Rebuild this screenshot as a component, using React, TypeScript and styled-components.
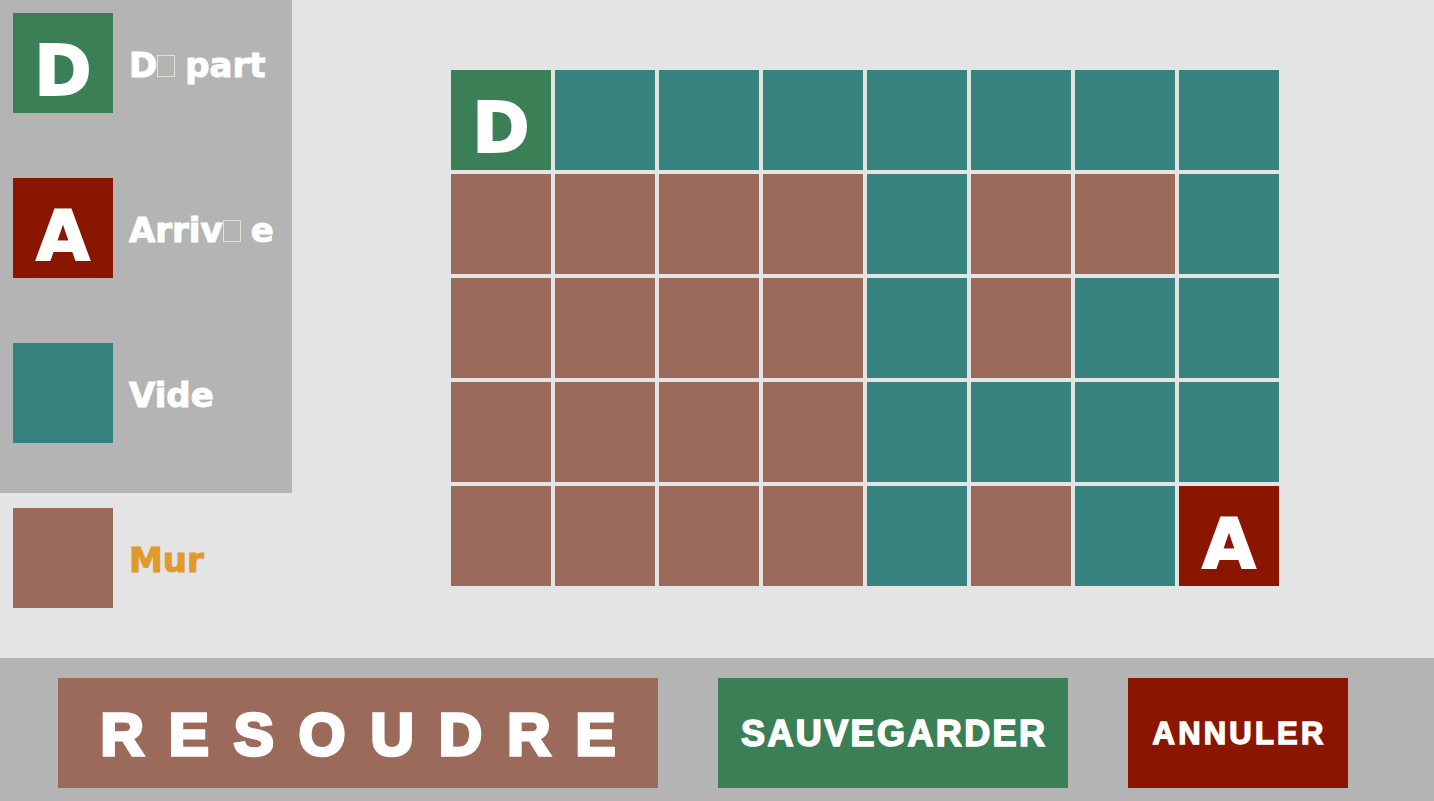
import React from "react";
import styled, { createGlobalStyle } from "styled-components";

const GlobalStyle = createGlobalStyle`
  html, body { margin: 0; padding: 0; }
  body { background: #e4e4e4; font-family: "DejaVu Sans", sans-serif; }
`;

type Kind = "D" | "A" | "V" | "M";

const COLORS: Record<Kind, string> = {
  D: "#3a7f55",
  A: "#8a1600",
  V: "#36827e",
  M: "#9c6a5b",
};

const Page = styled.div`
  width: 1434px;
  height: 801px;
  display: flex;
  flex-direction: column;
  background: #e4e4e4;
  overflow: hidden;
`;

const Main = styled.div`
  flex: 1;
  display: flex;
  min-height: 0;
`;

const LegendColumn = styled.div`
  width: 292px;
  display: flex;
  flex-direction: column;
`;

const LegendPanel = styled.div`
  background: #b4b4b4;
  height: 493px;
  box-sizing: border-box;
  padding: 13px 0 0 13px;
  display: flex;
  flex-direction: column;
  gap: 65px;
`;

const LegendItem = styled.div<{ $offset?: number }>`
  display: flex;
  align-items: center;
  gap: 16px;
  margin-top: ${(p) => p.$offset ?? 0}px;
  padding-left: ${(p) => (p.$offset ? 13 : 0)}px;
`;

const Square = styled.div<{ $kind: Kind }>`
  width: 100px;
  height: 100px;
  flex: none;
  background: ${(p) => COLORS[p.$kind]};
  display: flex;
  align-items: center;
  justify-content: center;
  box-sizing: border-box;
  padding-top: 16px;
  color: #ffffff;
  font-family: "DejaVu Sans", sans-serif;
  font-weight: bold;
  font-size: 69px;
  line-height: normal;
  -webkit-text-stroke: 2px #ffffff;
`;

const Label = styled.span<{ $color?: string }>`
  font-family: "DejaVu Sans", sans-serif;
  font-weight: bold;
  font-size: 34px;
  color: ${(p) => p.$color ?? "#ffffff"};
  -webkit-text-stroke: 1px ${(p) => p.$color ?? "#ffffff"};
  padding-top: 3px;
  white-space: nowrap;
`;

const Tofu = styled.span`
  display: inline-block;
  width: 18px;
  height: 22px;
  box-sizing: border-box;
  border: 1px solid #e2e2d4;
  margin-right: 10px;
  vertical-align: baseline;
`;

const GridArea = styled.div`
  flex: 1;
  display: flex;
  align-items: center;
  justify-content: center;
  padding: 0 0 2px 4px;
`;

const Grid = styled.div`
  display: grid;
  grid-template-columns: repeat(8, 100px);
  grid-auto-rows: 100px;
  gap: 4px;
`;

const BottomBar = styled.div`
  height: 143px;
  flex: none;
  background: #b4b4b4;
  box-sizing: border-box;
  padding: 20px 0 0 58px;
  display: flex;
  align-items: flex-start;
  gap: 60px;
`;

const ActionButton = styled.button<{
  $bg: string;
  $width: number;
  $size: number;
  $spacing: number;
  $stroke: number;
}>`
  width: ${(p) => p.$width}px;
  height: 110px;
  border: none;
  padding: 0;
  background: ${(p) => p.$bg};
  color: #ffffff;
  font-family: "Liberation Sans", Arial, sans-serif;
  font-weight: bold;
  font-size: ${(p) => p.$size}px;
  letter-spacing: ${(p) => p.$spacing}px;
  -webkit-text-stroke: ${(p) => p.$stroke}px #ffffff;
  display: flex;
  align-items: center;
  justify-content: center;
  cursor: pointer;
`;

const ButtonText = styled.span<{ $spacing: number }>`
  margin-right: -${(p) => p.$spacing}px;
  padding-top: 2px;
`;

const GRID: Kind[][] = [
  ["D", "V", "V", "V", "V", "V", "V", "V"],
  ["M", "M", "M", "M", "V", "M", "M", "V"],
  ["M", "M", "M", "M", "V", "M", "V", "V"],
  ["M", "M", "M", "M", "V", "V", "V", "V"],
  ["M", "M", "M", "M", "V", "M", "V", "A"],
];

export default function App() {
  return (
    <>
      <GlobalStyle />
      <Page>
        <Main>
          <LegendColumn>
            <LegendPanel>
              <LegendItem>
                <Square $kind="D">D</Square>
                <Label>
                  D<Tofu />part
                </Label>
              </LegendItem>
              <LegendItem>
                <Square $kind="A">A</Square>
                <Label>
                  Arriv<Tofu />e
                </Label>
              </LegendItem>
              <LegendItem>
                <Square $kind="V" />
                <Label>Vide</Label>
              </LegendItem>
            </LegendPanel>
            <LegendItem $offset={15}>
              <Square $kind="M" />
              <Label $color="#e0992a">Mur</Label>
            </LegendItem>
          </LegendColumn>
          <GridArea>
            <Grid>
              {GRID.flatMap((row, r) =>
                row.map((k, c) => (
                  <Square key={`${r}-${c}`} $kind={k}>
                    {k === "D" || k === "A" ? k : null}
                  </Square>
                ))
              )}
            </Grid>
          </GridArea>
        </Main>
        <BottomBar>
          <ActionButton $bg="#9c6a5b" $width={600} $size={60} $spacing={25} $stroke={3.5}>
            <ButtonText $spacing={25}>RESOUDRE</ButtonText>
          </ActionButton>
          <ActionButton $bg="#3a7f55" $width={350} $size={36} $spacing={2.4} $stroke={1.6}>
            <ButtonText $spacing={2.4}>SAUVEGARDER</ButtonText>
          </ActionButton>
          <ActionButton $bg="#8a1600" $width={220} $size={31} $spacing={3.2} $stroke={1.4}>
            <ButtonText $spacing={3.2}>ANNULER</ButtonText>
          </ActionButton>
        </BottomBar>
      </Page>
    </>
  );
}
